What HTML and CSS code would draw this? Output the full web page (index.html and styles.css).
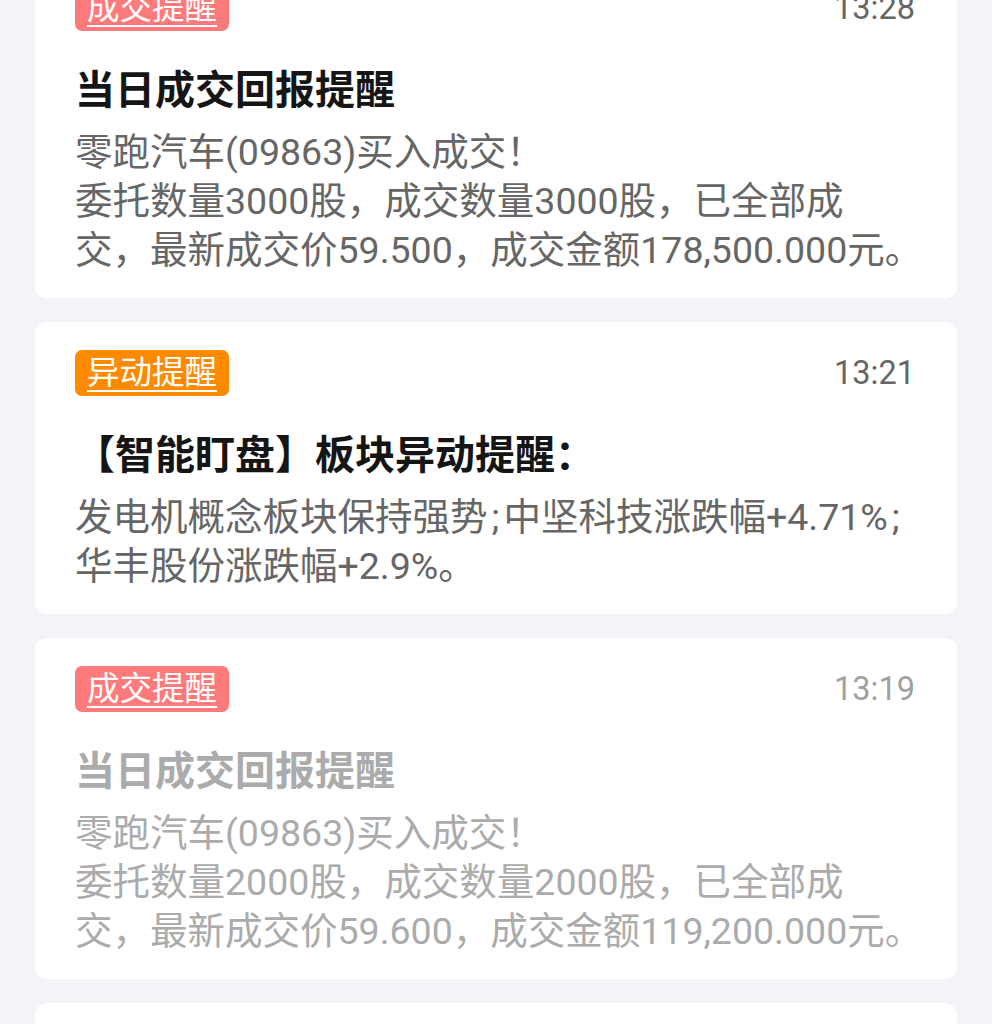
FILE: index.html
```html
<!DOCTYPE html>
<html lang="zh-CN">
<head>
<meta charset="utf-8">
<title>消息提醒</title>
<link rel="stylesheet" href="styles.css">
</head>
<body>
<div class="list">
  <div class="card">
    <div class="head">
      <span class="tag tag-deal">成交提醒</span>
      <span class="time">13:28</span>
    </div>
    <div class="title">当日成交回报提醒</div>
    <div class="body">
      <span class="line">零跑汽车(09863)买入成交！</span>
      <span class="line">委托数量3000股，成交数量3000股，已全部成</span>
      <span class="line">交，最新成交价59.500，成交金额178,500.000元。</span>
    </div>
  </div>
  <div class="card">
    <div class="head">
      <span class="tag tag-move">异动提醒</span>
      <span class="time">13:21</span>
    </div>
    <div class="title">【智能盯盘】板块异动提醒：</div>
    <div class="body">
      <span class="line">发电机概念板块保持强势<span class="semi">;</span>中坚科技涨跌幅+4.71%<span class="semi">;</span></span>
      <span class="line">华丰股份涨跌幅+2.9%。</span>
    </div>
  </div>
  <div class="card read">
    <div class="head">
      <span class="tag tag-deal">成交提醒</span>
      <span class="time">13:19</span>
    </div>
    <div class="title">当日成交回报提醒</div>
    <div class="body">
      <span class="line">零跑汽车(09863)买入成交！</span>
      <span class="line">委托数量2000股，成交数量2000股，已全部成</span>
      <span class="line">交，最新成交价59.600，成交金额119,200.000元。</span>
    </div>
  </div>
  <div class="card read">
    <div class="head">
      <span class="tag tag-deal">成交提醒</span>
      <span class="time">13:15</span>
    </div>
    <div class="title">当日成交回报提醒</div>
    <div class="body">
      <span class="line">零跑汽车(09863)买入成交！</span>
    </div>
  </div>
</div>
</body>
</html>
```

FILE: styles.css
```css
html, body {
  margin: 0;
  padding: 0;
  background: #f3f4f8;
}
body {
  font-family: Roboto, "Noto Sans CJK SC", sans-serif;
  overflow: hidden;
}
.list {
  display: flex;
  flex-direction: column;
  gap: 24px;
  margin-top: -43px;
  padding: 0 35px;
}
.card {
  background: #ffffff;
  border-radius: 12px;
  padding: 28px 41px 23px 40px;
}
.head {
  display: flex;
  justify-content: space-between;
  align-items: center;
  height: 46px;
}
.tag {
  display: inline-block;
  height: 46px;
  line-height: 46px;
  padding: 0 12px;
  border-radius: 7px;
  color: #ffffff;
  font-size: 32.5px;
  text-decoration: underline;
  text-underline-offset: 6px;
  text-decoration-thickness: 2px;
}
.tag-deal { background: #ff7a7a; }
.tag-move { background: #ff8a00; }
.time {
  font-size: 32.5px;
  color: #666666;
  padding-right: 1px;
}
.title {
  margin-top: 32px;
  font-size: 40px;
  line-height: 56px;
  font-weight: 700;
  color: #151515;
}
.body {
  margin-top: 9px;
  font-size: 37.5px;
  line-height: 49px;
  color: #666666;
}
.line {
  display: block;
  white-space: nowrap;
}
.semi {
  padding: 0 4px;
}
.read .time { color: #a0a0a0; }
.read .title { color: #ababab; }
.read .body { color: #ababab; }
```
